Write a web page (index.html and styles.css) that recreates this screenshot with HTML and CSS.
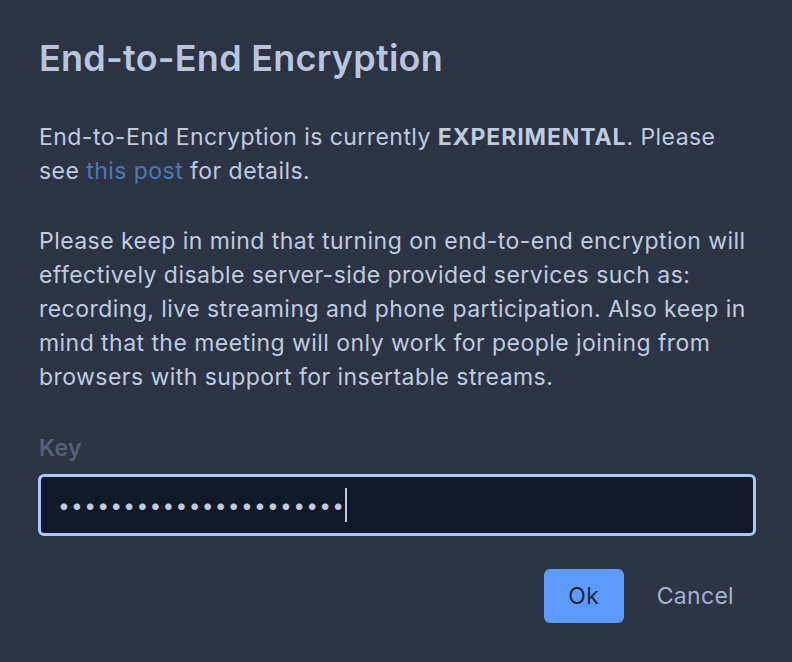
FILE: index.html
```html
<!DOCTYPE html>
<html>
<head>
<meta charset="utf-8">
<link rel="stylesheet" href="styles.css">
</head>
<body>
<div class="dialog">
  <h1 class="title">End-to-End Encryption</h1>
  <p class="text">End-to-End Encryption is currently <b>EXPERIMENTAL</b>. Please see <a class="link" href="#">this post</a> for details.</p>
  <p class="text">Please keep in mind that turning on end-to-end encryption will effectively disable server-side provided services such as: recording, live streaming and phone participation. Also keep in mind that the meeting will only work for people joining from browsers with support for insertable streams.</p>
  <label class="label">Key</label>
  <div class="input"><span class="dots">••••••••••••••••••••••</span><span class="caret"></span></div>
  <div class="actions">
    <button class="btn-ok">Ok</button>
    <button class="btn-cancel">Cancel</button>
  </div>
</div>
</body>
</html>
```
FILE: styles.css
```css
html, body {
  margin: 0;
  padding: 0;
  background: #2b3344;
  width: 792px;
  height: 662px;
  overflow: hidden;
}
.dialog {
  padding: 36px 36px 0 39px;
  font-family: Inter, "Noto Sans", sans-serif;
  color: #c0cbe0;
}
.title {
  margin: 0;
  font-size: 36px;
  font-weight: 600;
  color: #b9c5df;
  line-height: 44px;
  letter-spacing: 0.25px;
}
.text {
  margin: 40px 0 0 0;
  font-size: 23px;
  line-height: 34px;
  letter-spacing: 0.45px;
}
.text + .text { margin-top: 36px; }
.text b { font-weight: 700; letter-spacing: 0.9px; }
.link { color: #4a7ab8; text-decoration: none; }
.label {
  display: block;
  margin-top: 39px;
  font-size: 23px;
  font-weight: 600;
  letter-spacing: 0.3px;
  color: #566175;
  line-height: 30px;
}
.input {
  box-sizing: border-box;
  margin: 11px 0 0 -1px;
  height: 62px;
  border: 3px solid #a6c8ff;
  border-radius: 6px;
  background: #111827;
  display: flex;
  align-items: center;
  padding-left: 17px;
}
.dots {
  font-size: 21px;
  letter-spacing: 1.25px;
  color: #c0cbe0;
}
.caret {
  width: 2px;
  height: 34px;
  background: #c0cbe0;
  margin-left: 0px;
}
.actions {
  display: flex;
  justify-content: flex-end;
  align-items: center;
  margin-top: 33px;
  gap: 16px;
}
.btn-ok {
  width: 80px;
  height: 54px;
  border: none;
  border-radius: 6px;
  background: #5d9bff;
  color: #1f2738;
  font-family: Inter, sans-serif;
  font-size: 23px;
  letter-spacing: 0.3px;
  padding: 0;
}
.btn-cancel {
  background: none;
  border: none;
  color: #a3b2ce;
  font-family: Inter, sans-serif;
  font-size: 23px;
  letter-spacing: 0.3px;
  padding: 0 22px 0 17px;
  height: 54px;
}
```
